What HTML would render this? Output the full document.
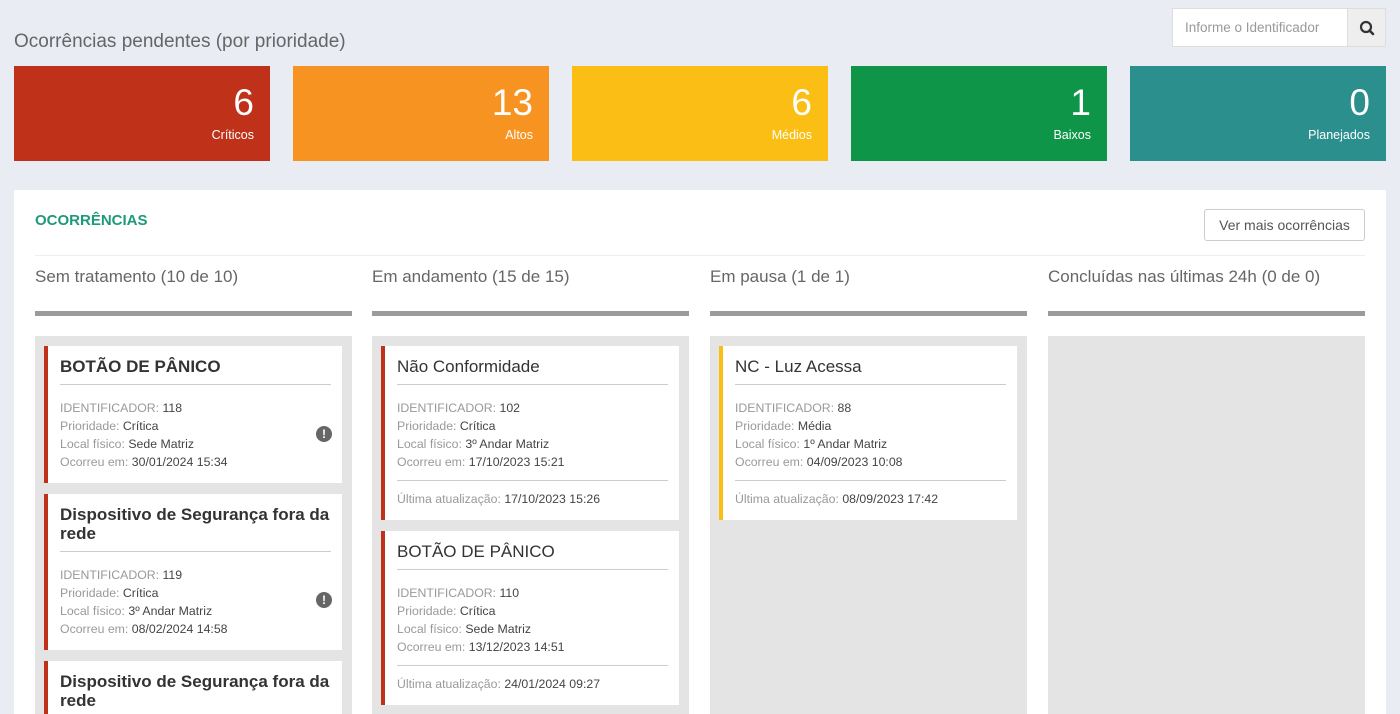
<!DOCTYPE html>
<html style="width:1400px;height:714px;overflow:hidden"><head><meta charset="utf-8"><style>
*{box-sizing:border-box;margin:0;padding:0}
body{width:1400px;height:714px;overflow:hidden;background:#e9ecf3;font-family:"Liberation Sans",sans-serif;position:relative;color:#555}
.a{position:absolute}
.tile{position:absolute;top:66px;width:256px;height:95px;color:#fff;text-align:right;padding-right:16px}
.tile .n{font-size:37px;line-height:36px;margin-top:19px}
.tile .l{font-size:12.5px;margin-top:7px}
.col{position:absolute;top:336px;width:317px;height:378px;background:#e4e4e4;overflow:hidden}
.hd{position:absolute;top:267px;font-size:17px;color:#666}
.bar{position:absolute;top:311px;width:317px;height:5px;background:#9b9b9b}
.card{position:absolute;left:9px;width:298px;background:#fff;border-left:4px solid #c0311a;padding:11px 11px 0 12px;overflow:hidden}
.card h3{font-size:17px;line-height:19px;color:#333;padding-bottom:8px;border-bottom:1px solid #ccc;margin-bottom:14px}
.card h3.b{font-weight:bold}
.card h3.r{font-weight:normal}
.card p{font-size:12.3px;line-height:18px;color:#999}
.card p b{font-weight:normal;color:#444}
.card .up{border-top:1px solid #ccc;margin-top:9px;padding-top:9px}
.ex{position:absolute;right:10px;width:16px;height:16px;border-radius:50%;background:#666;color:#fff;font-size:12px;font-weight:bold;text-align:center;line-height:16px}
</style></head><body>
<div class="a" style="left:14px;top:31px;font-size:19px;color:#666">Ocorrências pendentes (por prioridade)</div>
<div class="a" style="left:1172px;top:8px;width:176px;height:39px;background:#fff;border:1px solid #ddd;font-size:13.5px;color:#999;padding:11px 0 0 12px">Informe o Identificador</div>
<div class="a" style="left:1347px;top:8px;width:39px;height:39px;background:#eee;border:1px solid #ddd">
<svg width="39" height="39" viewBox="0 0 39 39"><circle cx="18" cy="18" r="5" fill="none" stroke="#333" stroke-width="2.2"/><line x1="21.5" y1="21.5" x2="25" y2="25" stroke="#333" stroke-width="2.6" stroke-linecap="round"/></svg></div>
<div class="tile" style="left:14px;background:#c0311a"><div class="n">6</div><div class="l">Críticos</div></div>
<div class="tile" style="left:293px;background:#f79421"><div class="n">13</div><div class="l">Altos</div></div>
<div class="tile" style="left:572px;background:#fbbe14"><div class="n">6</div><div class="l">Médios</div></div>
<div class="tile" style="left:851px;background:#0e9548"><div class="n">1</div><div class="l">Baixos</div></div>
<div class="tile" style="left:1130px;background:#2b8f8d"><div class="n">0</div><div class="l">Planejados</div></div>
<div class="a" style="left:14px;top:190px;width:1372px;height:524px;background:#fff"></div>
<div class="a" style="left:35px;top:212px;font-size:15px;font-weight:bold;color:#1e9a7a">OCORRÊNCIAS</div>
<div class="a" style="left:1204px;top:209px;width:161px;height:32px;border:1px solid #ccc;border-radius:3px;font-size:14px;color:#555;text-align:center;line-height:30px">Ver mais ocorrências</div>
<div class="a" style="left:35px;top:255px;width:1330px;height:1px;background:#eee"></div>
<div class="hd" style="left:35px">Sem tratamento (10 de 10)</div>
<div class="hd" style="left:372px">Em andamento (15 de 15)</div>
<div class="hd" style="left:710px">Em pausa (1 de 1)</div>
<div class="hd" style="left:1048px">Concluídas nas últimas 24h (0 de 0)</div>
<div class="bar" style="left:35px"></div><div class="bar" style="left:372px"></div><div class="bar" style="left:710px"></div><div class="bar" style="left:1048px"></div>

<div class="col" style="left:35px">
<div class="card" style="top:10px;height:137px"><h3 class="b">BOTÃO DE PÂNICO</h3>
<p>IDENTIFICADOR: <b>118</b><br>Prioridade: <b>Crítica</b><br>Local físico: <b>Sede Matriz</b><br>Ocorreu em: <b>30/01/2024 15:34</b></p><div class="ex" style="top:80px">!</div></div>
<div class="card" style="top:158px;height:156px"><h3 class="b">Dispositivo de Segurança fora da rede</h3>
<p>IDENTIFICADOR: <b>119</b><br>Prioridade: <b>Crítica</b><br>Local físico: <b>3º Andar Matriz</b><br>Ocorreu em: <b>08/02/2024 14:58</b></p><div class="ex" style="top:98px">!</div></div>
<div class="card" style="top:325px;height:53px"><h3 class="b">Dispositivo de Segurança fora da rede</h3></div>
</div>
<div class="col" style="left:372px">
<div class="card" style="top:10px;height:174px"><h3 class="r">Não Conformidade</h3>
<p>IDENTIFICADOR: <b>102</b><br>Prioridade: <b>Crítica</b><br>Local físico: <b>3º Andar Matriz</b><br>Ocorreu em: <b>17/10/2023 15:21</b></p><p class="up">Última atualização: <b>17/10/2023 15:26</b></p></div>
<div class="card" style="top:195px;height:174px"><h3 class="r">BOTÃO DE PÂNICO</h3>
<p>IDENTIFICADOR: <b>110</b><br>Prioridade: <b>Crítica</b><br>Local físico: <b>Sede Matriz</b><br>Ocorreu em: <b>13/12/2023 14:51</b></p><p class="up">Última atualização: <b>24/01/2024 09:27</b></p></div>
</div>
<div class="col" style="left:710px">
<div class="card" style="top:10px;height:174px;border-left-color:#fbbe14"><h3 class="r">NC - Luz Acessa</h3>
<p>IDENTIFICADOR: <b>88</b><br>Prioridade: <b>Média</b><br>Local físico: <b>1º Andar Matriz</b><br>Ocorreu em: <b>04/09/2023 10:08</b></p><p class="up">Última atualização: <b>08/09/2023 17:42</b></p></div>
</div>
<div class="col" style="left:1048px"></div>
</body></html>
